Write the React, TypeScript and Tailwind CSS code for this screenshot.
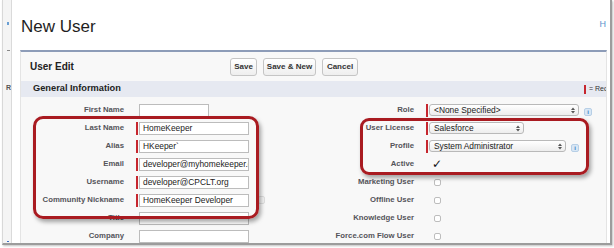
import { ReactNode } from "react";

type LeftRow = { label: string; req?: boolean; value?: string; width: string; extra?: boolean };

const leftRows: LeftRow[] = [
  { label: "First Name", width: "w-[70px]" },
  { label: "Last Name", req: true, value: "HomeKeeper", width: "w-[110px]" },
  { label: "Alias", req: true, value: "HKeeper`", width: "w-[110px]" },
  { label: "Email", req: true, value: "developer@myhomekeeper.org", width: "w-[110px]" },
  { label: "Username", req: true, value: "developer@CPCLT.org", width: "w-[110px]" },
  { label: "Community Nickname", req: true, value: "HomeKeeper Developer", width: "w-[110px]", extra: true },
  { label: "Title", width: "w-[110px]" },
  { label: "Company", width: "w-[110px]" },
];

function Label({ children }: { children: ReactNode }) {
  return (
    <div className="w-[103px] shrink-0 text-right text-[7.75px] font-bold text-[#54545a] whitespace-nowrap leading-[10px]">
      {children}
    </div>
  );
}

function ReqBar({ on }: { on?: boolean }) {
  return <div className={`w-[2px] h-[13px] mr-[1px] shrink-0 ${on ? "bg-[#c6262e]" : ""}`} />;
}

function InfoIcon() {
  return (
    <div className="ml-[5px] mt-[3px] w-[8px] h-[8px] rounded-[2px] bg-[#d8e7f5] border border-[#b7cfe6] flex items-center justify-center text-[6px] font-bold leading-none text-[#3c7fc6]">
      i
    </div>
  );
}

function Select({ value, width }: { value: string; width: string }) {
  return (
    <div
      className={`${width} h-[12px] rounded-[3px] border border-[#b9b9b9] bg-gradient-to-b from-white to-[#ededed] flex items-center pl-[4px] pr-[3px] text-[8.4px] leading-none text-[#222]`}
    >
      <span className="flex-1 whitespace-nowrap">{value}</span>
      <svg width="4" height="7" viewBox="0 0 4 7" className="shrink-0">
        <path d="M0 3 L2 0.5 L4 3 Z M0 4 L2 6.5 L4 4 Z" fill="#555" />
      </svg>
    </div>
  );
}

function Checkbox() {
  return <div className="ml-[8px] w-[7px] h-[7px] rounded-[2px] border border-[#bdbdbd] bg-white" />;
}

export default function App() {
  return (
    <div className="relative w-[614px] h-[248px] overflow-hidden bg-white font-['Liberation_Sans',Arial,sans-serif]">
      <div className="ml-[2px] w-[610px] h-[245px] flex overflow-hidden border-l border-[#d8d8d8] border-r-2 border-b-2 border-r-[#9c9c9c] border-b-[#9c9c9c] shadow-[1px_1px_2px_rgba(0,0,0,0.25)]">
        {/* cut-off sidebar on the left */}
        <aside className="relative w-[9px] shrink-0 bg-[#f4f4f4] border-r border-[#dadada] overflow-hidden">
          <span className="absolute left-[4px] top-[22px] w-[2px] h-[3px] bg-[#6a9fd3]" />
          <span className="absolute left-[4px] top-[50px] w-[3px] h-[1px] bg-[#888]" />
          <span className="absolute left-[3px] top-[84px] text-[7px] font-bold text-[#555] leading-none">R</span>
          <span className="absolute left-[4px] top-[241px] w-[2px] h-[1px] bg-[#3a6ec7]" />
        </aside>

        <main className="flex-1 min-w-0 flex flex-col pl-[8px] pr-[3px] bg-white">
          <div className="h-[50px] shrink-0 flex items-start justify-between">
            <h1 className="mt-[17px] ml-[1px] text-[17px] leading-[20px] text-[#1e1e1e]">New User</h1>
            <span className="mt-[19px] mr-[1px] text-[9px] leading-[10px] text-[#5b93cc]">H</span>
          </div>

          <section className="flex-1 bg-[#f8f8f8] border-t-2 border-t-[#8d9cb8] border-x border-x-[#e4e4e4]">
            <div className="h-[29px] flex items-center pl-[9px]">
              <div className="w-[200px] shrink-0 text-[10px] font-bold text-[#222]">User Edit</div>
              <div className="flex items-center gap-[6px] text-[8px] font-bold text-[#333]">
                <button className="w-[27px] h-[18px] rounded-[3px] border border-[#c5c5c5] bg-gradient-to-b from-white to-[#eeeeee]">Save</button>
                <button className="w-[53px] h-[18px] rounded-[3px] border border-[#c5c5c5] bg-gradient-to-b from-white to-[#eeeeee]">Save &amp; New</button>
                <button className="w-[36px] h-[18px] rounded-[3px] border border-[#c5c5c5] bg-gradient-to-b from-white to-[#eeeeee]">Cancel</button>
              </div>
            </div>

            <div className="h-[16px] flex items-center pl-[12px] bg-[#e6e9f1] overflow-hidden whitespace-nowrap">
              <div className="w-[551px] shrink-0 text-[9.25px] font-bold text-[#222]">General Information</div>
              <div className="w-[2px] h-[9px] bg-[#c6262e] shrink-0" />
              <div className="ml-[3px] text-[7px] text-[#333]">= Required Information</div>
            </div>

            <div className="pt-[4px] flex">
              {/* left column */}
              <div className="w-[290px] shrink-0 flex flex-col">
                {leftRows.map((r) => (
                  <div key={r.label} className="h-[18px] flex items-center">
                    <Label>{r.label}</Label>
                    <div className="ml-[12px] flex items-center">
                      <ReqBar on={r.req} />
                      <div
                        className={`${r.width} h-[13px] border border-[#bcbcbc] bg-white pl-[3px] text-[8.4px] leading-[11px] text-[#222] whitespace-nowrap overflow-hidden`}
                      >
                        {r.value}
                      </div>
                      {r.extra && <div className="ml-[9px] w-[7px] h-[8px] rounded-[2px] border border-[#dedede] bg-[#f3f3f3]" />}
                    </div>
                  </div>
                ))}
              </div>

              {/* right column */}
              <div className="flex-1 flex flex-col">
                <div className="h-[18px] flex items-center">
                  <Label>Role</Label>
                  <div className="ml-[12px] flex items-center">
                    <ReqBar on />
                    <Select value="<None Specified>" width="w-[150px]" />
                    <InfoIcon />
                  </div>
                </div>
                <div className="h-[18px] flex items-center">
                  <Label>User License</Label>
                  <div className="ml-[12px] flex items-center">
                    <ReqBar on />
                    <Select value="Salesforce" width="w-[95px]" />
                  </div>
                </div>
                <div className="h-[18px] flex items-center">
                  <Label>Profile</Label>
                  <div className="ml-[12px] flex items-center">
                    <ReqBar on />
                    <Select value="System Administrator" width="w-[137px]" />
                    <InfoIcon />
                  </div>
                </div>
                <div className="h-[18px] flex items-center">
                  <Label>Active</Label>
                  <span className="ml-[18px] text-[12px] font-bold leading-none text-[#111] font-['DejaVu_Sans',sans-serif]">✓</span>
                </div>
                {["Marketing User", "Offline User", "Knowledge User", "Force.com Flow User"].map((l) => (
                  <div key={l} className="h-[18px] flex items-center">
                    <Label>{l}</Label>
                    <div className="ml-[12px]">
                      <Checkbox />
                    </div>
                  </div>
                ))}
              </div>
            </div>
          </section>
        </main>
      </div>

      {/* red annotation outlines drawn over the form */}
      <div className="absolute left-[33px] top-[116px] w-[226px] h-[103px] rounded-[10px] border-[3px] border-[#a91b21] shadow-[2px_3px_4px_rgba(0,0,0,0.35)]" />
      <div className="absolute left-[360px] top-[118px] w-[229px] h-[57px] rounded-[9px] border-[3px] border-[#a91b21] shadow-[2px_3px_4px_rgba(0,0,0,0.35)]" />
    </div>
  );
}
